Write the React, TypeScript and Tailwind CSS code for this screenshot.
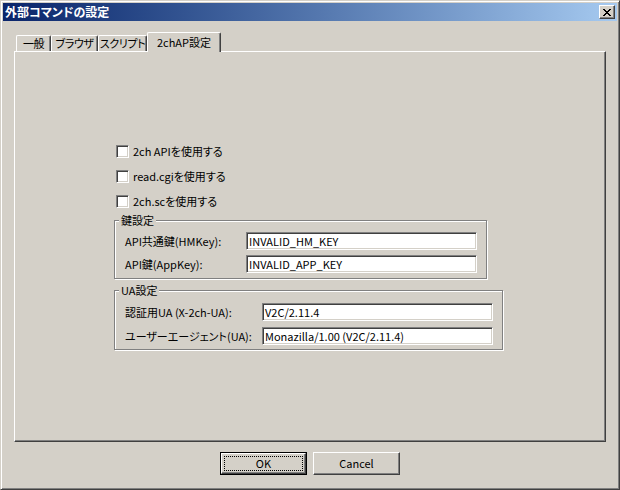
import React from "react";

const raised =
  "border border-t-white border-l-white border-r-[#404040] border-b-[#404040] shadow-[inset_-1px_-1px_0_#808080]";
const sunken =
  "border border-t-[#808080] border-l-[#808080] border-r-white border-b-white shadow-[inset_1px_1px_0_#404040,inset_-1px_-1px_0_#d4d0c8] bg-white";

function CloseGlyph() {
  const px: [number, number][] = [
    [0, 0], [1, 0], [6, 0], [7, 0],
    [1, 1], [2, 1], [5, 1], [6, 1],
    [2, 2], [3, 2], [4, 2], [5, 2],
    [3, 3], [4, 3],
    [2, 4], [3, 4], [4, 4], [5, 4],
    [1, 5], [2, 5], [5, 5], [6, 5],
    [0, 6], [1, 6], [6, 6], [7, 6],
  ];
  return (
    <svg width="8" height="7" viewBox="0 0 8 7" shapeRendering="crispEdges">
      {px.map(([x, y]) => (
        <rect key={`${x}-${y}`} x={x} y={y} width="1" height="1" fill="#000" />
      ))}
    </svg>
  );
}

function Tab({ label, w, selected }: { label: string; w: string; selected?: boolean }) {
  if (selected) {
    return (
      <div
        className={`relative z-10 -mb-px h-[20px] ${w} shrink-0 bg-[#d4d0c8] border-l border-t border-l-white border-t-white border-r border-r-[#404040] shadow-[inset_-1px_0_0_#808080] rounded-tl-[2px] rounded-tr-[2px] flex items-start justify-center pt-[3px] leading-[13px] whitespace-nowrap`}
      >
        {label}
      </div>
    );
  }
  return (
    <div
      className={`h-[16px] ${w} shrink-0 border-l border-t border-l-white border-t-white border-r border-r-[#404040] shadow-[inset_-1px_0_0_#808080] rounded-tl-[2px] rounded-tr-[2px] flex items-start justify-center pt-[1px] leading-[13px] tracking-[-0.4px] whitespace-nowrap`}
    >
      {label}
    </div>
  );
}

function Check({ label }: { label: string }) {
  return (
    <div className="h-[13px] flex items-center pl-[2px]">
      <div className={`w-[13px] h-[13px] ${sunken}`} />
      <span className="ml-[4px] leading-[13px] whitespace-nowrap">{label}</span>
    </div>
  );
}

function Field({ label, value, lw }: { label: string; value: string; lw: string }) {
  return (
    <div className="flex items-center h-[18px]">
      <span className={`${lw} shrink-0 leading-[13px] whitespace-nowrap`}>{label}</span>
      <div className={`w-[231px] h-[18px] shrink-0 ${sunken} flex items-center pl-[2px] leading-[13px] whitespace-nowrap`}>
        {value}
      </div>
    </div>
  );
}

function Group({
  title,
  w,
  h,
  pt,
  gap,
  children,
}: {
  title: string;
  w: string;
  h: string;
  pt: string;
  gap: string;
  children: React.ReactNode;
}) {
  return (
    <div
      className={`relative ${w} ${h} border border-[#808080] shadow-[inset_1px_1px_0_#fff,1px_1px_0_#fff] ${pt} pl-[10px] flex flex-col ${gap}`}
    >
      <span className="absolute left-[4px] top-[-7px] px-[2px] bg-[#d4d0c8] leading-[13px]">{title}</span>
      {children}
    </div>
  );
}

export default function App() {
  return (
    <div className="w-[620px] h-[490px] bg-[#d4d0c8] border border-t-[#d4d0c8] border-l-[#d4d0c8] border-r-[#404040] border-b-[#404040] shadow-[inset_1px_1px_0_#fff,inset_-1px_-1px_0_#808080] p-[2px] flex flex-col text-[11px] text-black font-['MS_UI_Gothic','Noto_Sans_CJK_JP',sans-serif] [font-feature-settings:'palt'] select-none">
      {/* title bar */}
      <div className="h-[18px] shrink-0 flex items-center bg-linear-to-r from-[#0a246a] to-[#a6caf0] pl-[2px] pr-[2px]">
        <span className="flex-1 text-white text-[12px] font-bold leading-[14px] whitespace-nowrap">外部コマンドの設定</span>
        <div className={`w-[16px] h-[14px] bg-[#d4d0c8] ${raised} flex items-center justify-center`}>
          <CloseGlyph />
        </div>
      </div>

      {/* body */}
      <div className="flex-1 flex flex-col px-[11px] pt-[11px]">
        <div className="h-[19px] flex items-end pl-[2px]">
          <Tab label="一般" w="w-[35px]" />
          <Tab label="ブラウザ" w="w-[47px]" />
          <Tab label="スクリプト" w="w-[49px]" />
          <Tab label="2chAP設定" w="w-[74px]" selected />
        </div>
        <div className="h-[391px] border border-t-white border-l-white border-r-[#404040] border-b-[#404040] shadow-[inset_-1px_-1px_0_#808080] pl-[99px] pt-[93px] flex flex-col">
          <div className="flex flex-col gap-[12px]">
            <Check label="2ch APIを使用する" />
            <Check label="read.cgiを使用する" />
            <Check label="2ch.scを使用する" />
          </div>
          <div className="mt-[12px]">
            <Group title="鍵設定" w="w-[373px]" h="h-[59px]" pt="pt-[11px]" gap="gap-[5px]">
              <Field label="API共通鍵(HMKey):" value="INVALID_HM_KEY" lw="w-[121px]" />
              <Field label="API鍵(AppKey):" value="INVALID_APP_KEY" lw="w-[121px]" />
            </Group>
          </div>
          <div className="mt-[11px]">
            <Group title="UA設定" w="w-[389px]" h="h-[60px]" pt="pt-[12px]" gap="gap-[6px]">
              <Field label="認証用UA (X-2ch-UA):" value="V2C/2.11.4" lw="w-[137px]" />
              <Field label="ユーザーエージェント(UA):" value="Monazilla/1.00 (V2C/2.11.4)" lw="w-[137px]" />
            </Group>
          </div>
        </div>

        {/* buttons */}
        <div className="mt-[10px] flex justify-center gap-[6px]">
          <div className="w-[87px] h-[23px] border border-black">
            <div className={`w-full h-full ${raised} p-[2px]`}>
              <div className="w-full h-full border border-dotted border-black flex items-center justify-center leading-[13px]">
                OK
              </div>
            </div>
          </div>
          <div className={`w-[87px] h-[23px] ${raised} flex items-center justify-center leading-[13px]`}>Cancel</div>
        </div>
      </div>
    </div>
  );
}
